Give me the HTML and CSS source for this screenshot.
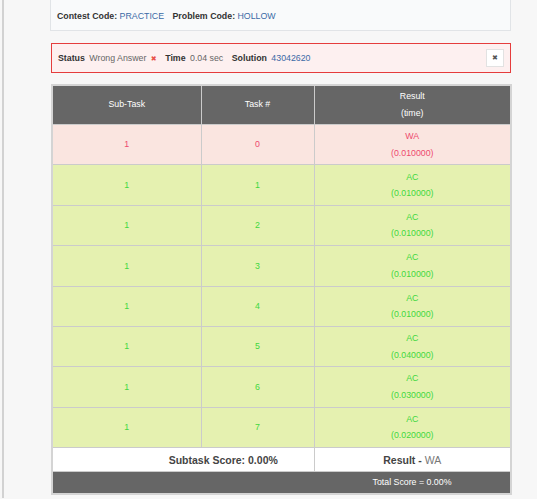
FILE: index.html
```html
<!DOCTYPE html>
<html lang="en">
<head>
    <meta charset="UTF-8">
    <title>Submission Result</title>
    <link rel="stylesheet" href="styles.css">
</head>
<body>
<div class="page">
    <div class="info-card">
        <span class="lbl">Contest Code:</span> <a class="val-link">PRACTICE</a>
        <span class="lbl sep">Problem Code:</span> <a class="val-link">HOLLOW</a>
    </div>

    <div class="status-bar">
        <span class="lbl">Status</span>
        <span class="val">Wrong Answer</span>
        <span class="cross">&#10006;</span>
        <span class="lbl sep">Time</span>
        <span class="val">0.04 sec</span>
        <span class="lbl sep">Solution</span>
        <a class="val val-link">43042620</a>
        <span class="close-btn">&#10006;</span>
    </div>

    <table class="result-table">
        <tr class="head">
            <th class="c1">Sub-Task</th>
            <th class="c2">Task #</th>
            <th class="c3">Result<br>(time)</th>
        </tr>
        <tr class="wa">
            <td>1</td><td>0</td><td>WA<br>(0.010000)</td>
        </tr>
        <tr class="ac">
            <td>1</td><td>1</td><td>AC<br>(0.010000)</td>
        </tr>
        <tr class="ac">
            <td>1</td><td>2</td><td>AC<br>(0.010000)</td>
        </tr>
        <tr class="ac">
            <td>1</td><td>3</td><td>AC<br>(0.010000)</td>
        </tr>
        <tr class="ac">
            <td>1</td><td>4</td><td>AC<br>(0.010000)</td>
        </tr>
        <tr class="ac">
            <td>1</td><td>5</td><td>AC<br>(0.040000)</td>
        </tr>
        <tr class="ac">
            <td>1</td><td>6</td><td>AC<br>(0.030000)</td>
        </tr>
        <tr class="ac">
            <td>1</td><td>7</td><td>AC<br>(0.020000)</td>
        </tr>
        <tr class="sub">
            <td colspan="2" class="sub-score">Subtask Score: 0.00%</td>
            <td>Result - <span class="plain">WA</span></td>
        </tr>
        <tr class="total">
            <td></td><td></td><td>Total Score = 0.00%</td>
        </tr>
    </table>
</div>
</body>
</html>
```

FILE: styles.css
```css
*{
    margin: 0;
    padding: 0;
    box-sizing: border-box;
}
html, body{
    background-color: #f7f7f7;
    font-family: "Liberation Sans", Arial, sans-serif;
    font-size: 8.8px;
    color: #333;
}
.page{
    margin-left: 2px;
    border-left: 2px solid #d2d2d2;
    min-height: 499px;
    padding-left: 46px;
    width: 509px;
}
.info-card{
    margin-top: -1px;
    height: 32px;
    padding: 10px 6px 0;
    line-height: 12px;
    background-color: #f9fafb;
    border: 1px solid #e1e4e7;
}
.lbl{
    font-weight: bold;
    color: #333;
}
.sep{
    margin-left: 6px;
}
.val{
    color: #666;
    margin-left: 2px;
}
.val-link{
    color: #3b6aa6;
    text-decoration: none;
}
.status-bar{
    position: relative;
    margin-top: 12px;
    margin-left: 1px;
    height: 30px;
    padding: 0 6px;
    line-height: 28px;
    background-color: #fdf0f0;
    border: 1px solid #e53d3d;
}
.cross{
    font-family: "DejaVu Sans", sans-serif;
    font-size: 7px;
    color: #e8504a;
    margin-left: 2px;
}
.close-btn{
    position: absolute;
    right: 6px;
    top: 5px;
    width: 18px;
    height: 18px;
    line-height: 16px;
    text-align: center;
    font-family: "DejaVu Sans", sans-serif;
    font-size: 7px;
    color: #555;
    background-color: #fff;
    border: 1px solid #e2e2e2;
}
.result-table{
    margin-top: 11px;
    margin-left: 1px;
    width: 461px;
    border-collapse: collapse;
    border: 2px solid #d4d4d4;
    text-align: center;
}
.result-table td, .result-table th{
    border: 1px solid #cbcbcb;
    font-weight: normal;
    vertical-align: middle;
}
.c1{ width: 149px; }
.c2{ width: 113px; }
.head th{
    background-color: #666;
    color: #fff;
    line-height: 17.5px;
    padding: 1.5px 4px;
}
.wa td, .ac td{
    line-height: 16.5px;
    padding: 3.2px 4px;
}
.wa td{
    background-color: #fae5e0;
    color: #ee4a6e;
}
.ac td{
    background-color: #e5f1b0;
    color: #3fd83f;
}
.sub td{
    background-color: #fff;
    height: 24px;
    font-size: 10.5px;
    font-weight: bold;
    color: #444;
}
.sub .sub-score{
    padding-left: 80px;
}
.plain{
    font-weight: normal;
    color: #777;
}
.total td{
    background-color: #666;
    color: #fff;
    height: 22px;
    border-left: none;
    border-right: none;
}
```
